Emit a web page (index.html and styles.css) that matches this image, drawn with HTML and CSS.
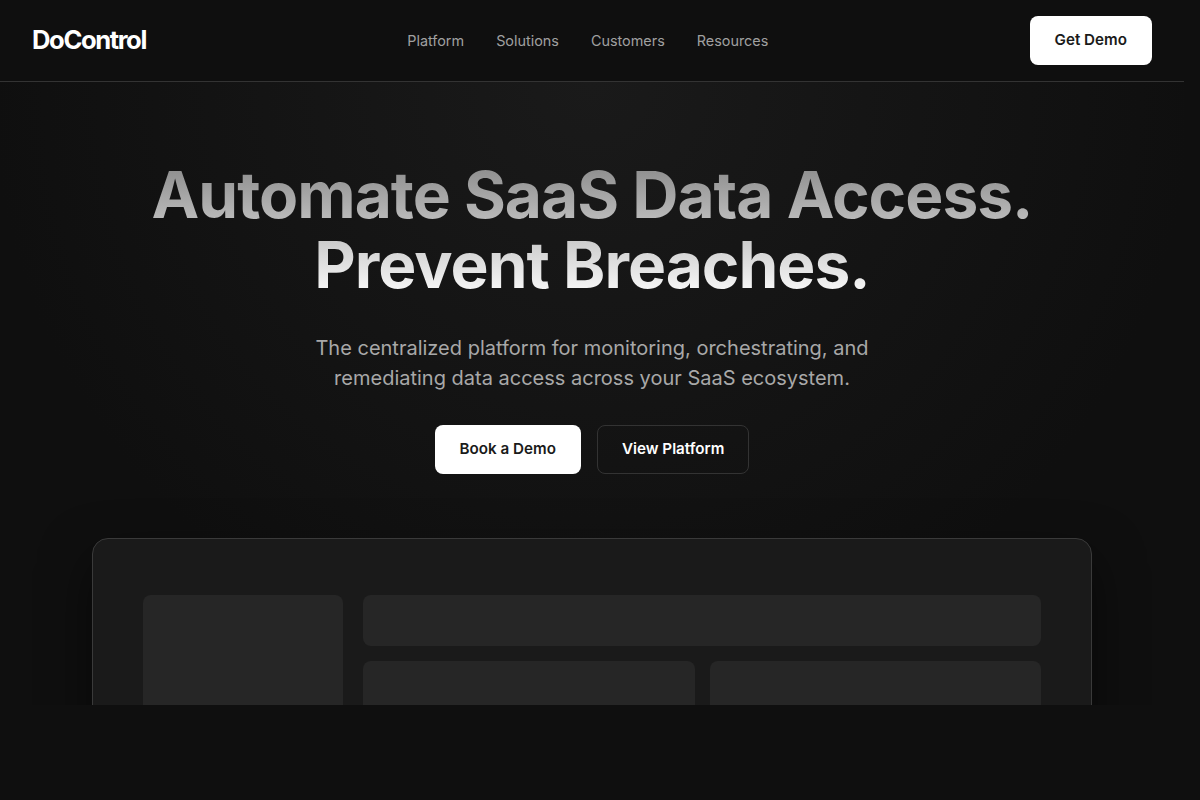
FILE: index.html
```html
<!DOCTYPE html>
<html lang="en">
<head>
    <meta charset="UTF-8">
    <title>DoControl</title>
    <meta name="viewport" content="width=device-width, initial-scale=1.0">
    <link rel="stylesheet" href="styles.css">
</head>
<body>
<div class="page">
    <header class="topbar">
        <div class="logo">DoControl</div>
        <nav class="nav">
            <a href="#">Platform</a>
            <a href="#">Solutions</a>
            <a href="#">Customers</a>
            <a href="#">Resources</a>
        </nav>
        <a href="#" class="btn btn-white">Get Demo</a>
    </header>
    <section class="hero">
        <h1>Automate SaaS Data Access.<br>Prevent Breaches.</h1>
        <p class="subtitle">The centralized platform for monitoring, orchestrating, and remediating data access across your SaaS ecosystem.</p>
        <div class="actions">
            <a href="#" class="btn btn-white">Book a Demo</a>
            <a href="#" class="btn btn-dark">View Platform</a>
        </div>
        <div class="panel">
            <div class="panel-grid">
                <div class="block block-side"></div>
                <div class="panel-main">
                    <div class="block block-wide"></div>
                    <div class="block block-tall"></div>
                    <div class="block block-tall"></div>
                </div>
            </div>
        </div>
    </section>
</div>
</body>
</html>
```

FILE: styles.css
```css
html, body {
    margin: 0;
    height: 100%;
    overflow: hidden;
    background: #0f0f0f;
}
body {
    font-family: Inter, "Liberation Sans", sans-serif;
    color: #fff;
}
a {
    text-decoration: none;
}
.page {
    width: 1184px;
}
.topbar {
    display: flex;
    justify-content: space-between;
    align-items: center;
    box-sizing: border-box;
    height: 82px;
    padding: 0 32px;
    border-bottom: 1px solid #333;
}
.logo {
    font-size: 25.6px;
    font-weight: 700;
    letter-spacing: -1.4px;
    margin-top: -3px;
}
.nav {
    display: flex;
    gap: 32px;
}
.nav a {
    color: #a0a0a0;
    font-size: 14.4px;
}
.btn {
    display: inline-block;
    box-sizing: border-box;
    height: 49px;
    line-height: 46px;
    padding: 0 24px;
    border-radius: 8px;
    border: 1px solid transparent;
    font-size: 15.2px;
    font-weight: 600;
}
.btn-white {
    background: #fff;
    color: #1a1a1a;
}
.btn-dark {
    background: transparent;
    color: #fff;
    border-color: #333;
}
.hero {
    box-sizing: border-box;
    height: 623px;
    padding-top: 78px;
    overflow: hidden;
    text-align: center;
    background: radial-gradient(circle at 50% 0%, #1a1a1a 0%, #0f0f0f 70%);
}
.hero h1 {
    margin: 0;
    font-size: 64px;
    font-weight: 700;
    line-height: 70.4px;
    letter-spacing: -1px;
    background: linear-gradient(180deg, #888 0%, #fff 100%);
    -webkit-background-clip: text;
    background-clip: text;
    color: transparent;
}
.subtitle {
    width: 600px;
    margin: 32px auto 0;
    color: #a8a8a8;
    font-size: 20px;
    line-height: 30px;
}
.actions {
    display: flex;
    justify-content: center;
    gap: 16px;
    margin-top: 32px;
}
.panel {
    box-sizing: border-box;
    width: 1000px;
    height: 400px;
    margin: 64px auto 0;
    padding: 56px 50px;
    background: #1a1a1a;
    border: 1px solid #3a3a3a;
    border-radius: 16px;
    box-shadow: 0 20px 50px rgba(0,0,0,0.5);
}
.panel-grid {
    display: grid;
    grid-template-columns: 200px 1fr;
    gap: 20px;
}
.panel-main {
    display: grid;
    grid-template-columns: 1fr 1fr;
    grid-template-rows: 51px 200px;
    gap: 15px;
}
.block {
    background: #262626;
    border-radius: 8px;
}
.block-wide {
    grid-column: 1 / 3;
}
```
